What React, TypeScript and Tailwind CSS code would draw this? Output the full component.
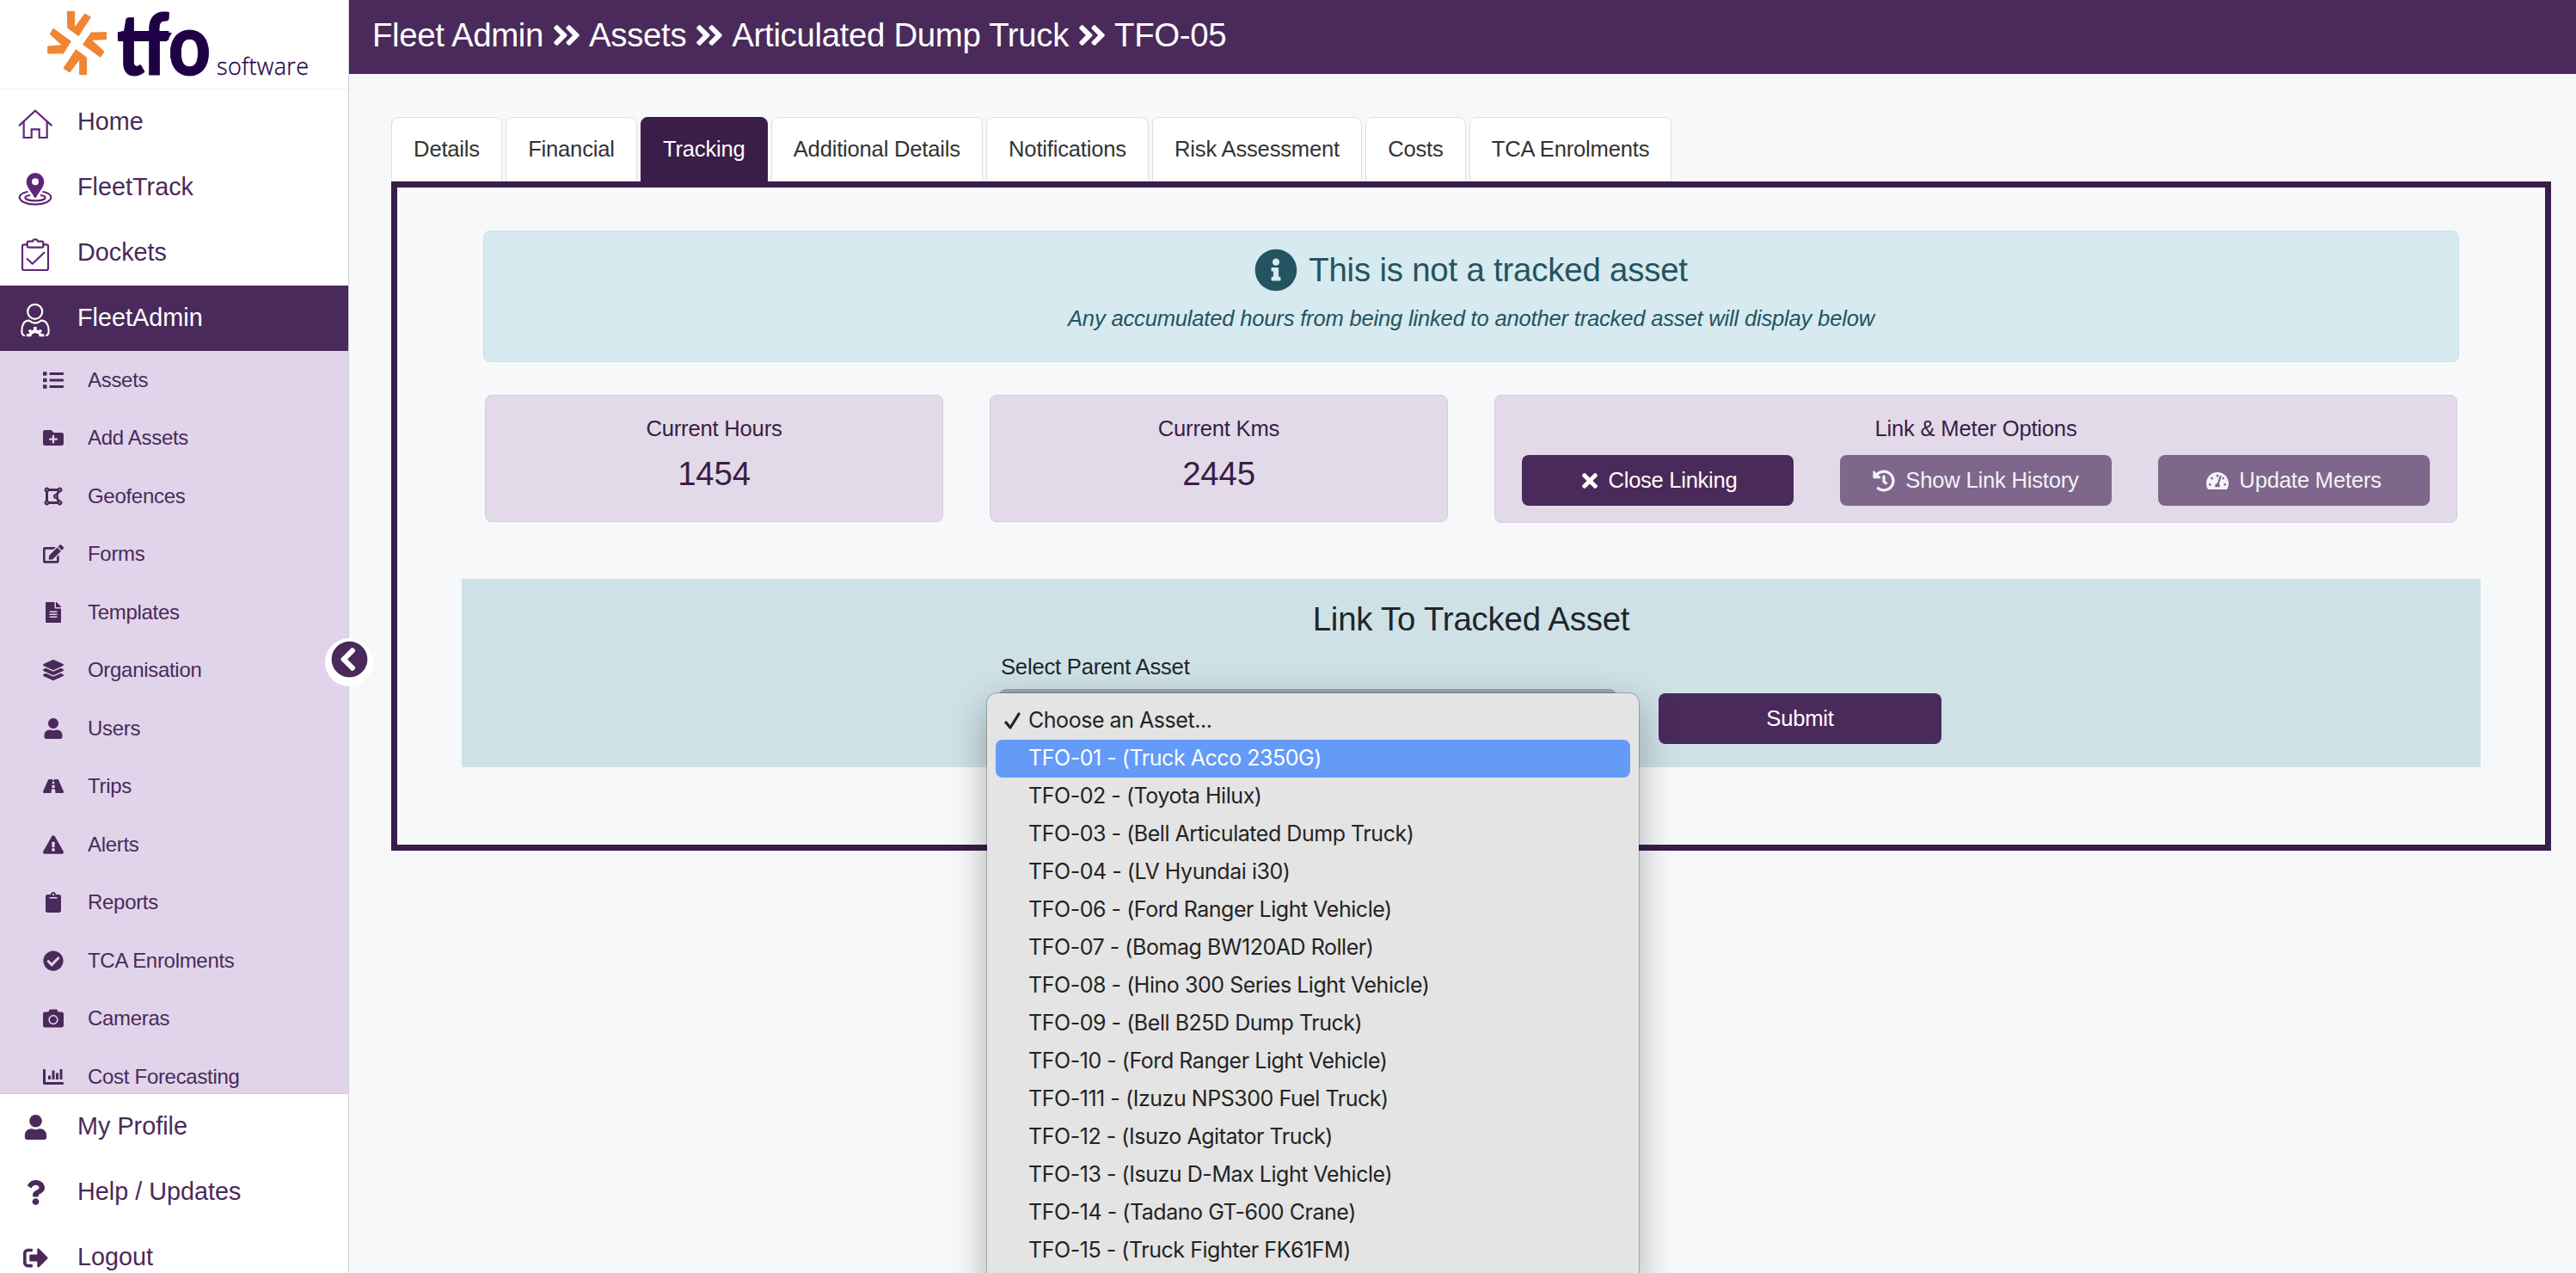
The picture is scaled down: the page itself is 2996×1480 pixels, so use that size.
import React from "react";
import type { IconType } from "react-icons";
import {
  FaAngleDoubleRight,
  FaCamera,
  FaChartBar,
  FaCheckCircle,
  FaChevronCircleLeft,
  FaClipboard,
  FaDrawPolygon,
  FaEdit,
  FaExclamationTriangle,
  FaFileAlt,
  FaFolderPlus,
  FaHistory,
  FaInfoCircle,
  FaLayerGroup,
  FaList,
  FaQuestion,
  FaRoad,
  FaSignOutAlt,
  FaTachometerAlt,
  FaTimes,
  FaUser,
} from "react-icons/fa";

const HomeIcon = () => (
  <svg width="40" height="35" viewBox="63 381 120 105" fill="none" stroke="currentColor" strokeWidth="6.5">
    <path d="M68 437 123 386l56 51" strokeLinecap="round" />
    <path d="M83 424v56h27v-29h27v29h27v-56" />
  </svg>
);

const TrackIcon = () => (
  <svg width="40" height="40" viewBox="63 601 120 120" fill="none" stroke="currentColor" strokeWidth="6.5" strokeLinecap="round">
    <path
      d="M123 604a31 31 0 0 0-31 31c0 20 19 36 27 54q4 3 8 0c8-18 27-34 27-54a31 31 0 0 0-31-31Zm0 19a12 12 0 1 1 0 24 12 12 0 0 1 0-24Z"
      fill="currentColor"
      fillRule="evenodd"
      stroke="none"
    />
    <path d="M95 670c-17 4-27 11-27 19 0 14 24 25 55 25s55-11 55-25c0-8-10-15-27-19" />
    <path d="M103 682c-10 2-15 5-15 8 0 7 16 11 35 11s35-4 35-11c0-3-5-6-15-8" />
  </svg>
);

const DocketIcon = () => (
  <svg width="40" height="40" viewBox="63 828 120 120" fill="none" stroke="currentColor" strokeWidth="6.5" strokeLinejoin="round" strokeLinecap="round">
    <path d="M95 853H84q-6 0-6 6v77q0 6 6 6h78q6 0 6-6v-77q0-6-6-6h-11" />
    <path d="M100 842h14q1-7 9-7t9 7h14q5 0 5 5v11q0 5-5 5h-46q-5 0-5-5v-11q0-5 5-5Z" />
    <path d="m95 903 18 17 41-39" />
  </svg>
);

const AdminIcon = () => (
  <svg width="40" height="40" viewBox="63 1054 120 120" fill="none" stroke="currentColor" strokeWidth="6.5" strokeLinecap="round">
    <circle cx="122" cy="1085" r="25.5" />
    <path d="M84 1168c-8-3-8-10-8-16 0-22 9-36 25-36 14 11 30 11 43 0 16 0 26 14 26 36 0 6 0 13-8 16" />
    <path
      d="M92 1172v-9h9l2-5-5-6 7-6 6 5 6-3v-10h11v10l6 3 6-5 7 6-5 6 2 5h10v9h-17c0-8-6-12-14-12s-14 4-14 12Z"
      fill="currentColor"
      stroke="none"
    />
  </svg>
);

const Logo = () => (
  <svg width="405" height="103" viewBox="0 0 405 103">
    <g transform="scale(0.33333)" fill="#f08534" stroke="#f08534" strokeWidth="3" strokeLinejoin="round">
      <path d="M235 40h25v57l36-49 20 12-42 65-38-28Z" />
      <path d="M371 113v24l-52 2 44 41-13 19-60-44 28-41Z" />
      <path d="m265 173 37 28v59h-24v-54l-35 46-21-14Z" />
      <path d="m186 100 61 44-26 42h-54v-24l50-4-42-39Z" />
    </g>
    <text x="136" y="86.500" fontSize="100" fontWeight="900" fill="#1f0045" stroke="#1f0045" strokeWidth="1" textLength="109" lengthAdjust="spacingAndGlyphs" className="font-['Lato',sans-serif]">
      tfo
    </text>
    <path d="M137 38h63l-6 10h-57Z" fill="#1f0045" />
    <text x="252" y="87" fontSize="27" fontWeight="300" fill="#1f0045" stroke="#1f0045" strokeWidth="0.3" textLength="107" className="font-['Open_Sans',sans-serif]">
      software
    </text>
  </svg>
);

const mainNav: { label: string; icon: React.FC; active?: boolean }[] = [
  { label: "Home", icon: HomeIcon },
  { label: "FleetTrack", icon: TrackIcon },
  { label: "Dockets", icon: DocketIcon },
  { label: "FleetAdmin", icon: AdminIcon, active: true },
];

const subNav: { label: string; icon: IconType }[] = [
  { label: "Assets", icon: FaList },
  { label: "Add Assets", icon: FaFolderPlus },
  { label: "Geofences", icon: FaDrawPolygon },
  { label: "Forms", icon: FaEdit },
  { label: "Templates", icon: FaFileAlt },
  { label: "Organisation", icon: FaLayerGroup },
  { label: "Users", icon: FaUser },
  { label: "Trips", icon: FaRoad },
  { label: "Alerts", icon: FaExclamationTriangle },
  { label: "Reports", icon: FaClipboard },
  { label: "TCA Enrolments", icon: FaCheckCircle },
  { label: "Cameras", icon: FaCamera },
  { label: "Cost Forecasting", icon: FaChartBar },
];

const footerNav: { label: string; icon: IconType }[] = [
  { label: "My Profile", icon: FaUser },
  { label: "Help / Updates", icon: FaQuestion },
  { label: "Logout", icon: FaSignOutAlt },
];

const tabs = [
  "Details",
  "Financial",
  "Tracking",
  "Additional Details",
  "Notifications",
  "Risk Assessment",
  "Costs",
  "TCA Enrolments",
];

const breadcrumbs = ["Fleet Admin", "Assets", "Articulated Dump Truck", "TFO-05"];

const assets = [
  "TFO-01 - (Truck Acco 2350G)",
  "TFO-02 - (Toyota Hilux)",
  "TFO-03 - (Bell Articulated Dump Truck)",
  "TFO-04 - (LV Hyundai i30)",
  "TFO-06 - (Ford Ranger Light Vehicle)",
  "TFO-07 - (Bomag BW120AD Roller)",
  "TFO-08 - (Hino 300 Series Light Vehicle)",
  "TFO-09 - (Bell B25D Dump Truck)",
  "TFO-10 - (Ford Ranger Light Vehicle)",
  "TFO-111 - (Izuzu NPS300 Fuel Truck)",
  "TFO-12 - (Isuzo Agitator Truck)",
  "TFO-13 - (Isuzu D-Max Light Vehicle)",
  "TFO-14 - (Tadano GT-600 Crane)",
  "TFO-15 - (Truck Fighter FK61FM)",
];

const Sidebar = () => (
  <aside className="relative flex w-[406px] shrink-0 flex-col border-r border-[#cfcfd6] bg-white text-[#4a2a5a]">
    <div className="h-[104px] shrink-0 border-b border-[#f1f1f3]">
      <Logo />
    </div>
    <nav className="shrink-0">
      {mainNav.map(({ label, icon: Icon, active }) => (
        <a
          key={label}
          className={`flex h-[76px] items-center text-[28.8px] ${
            active ? "bg-[#4a2a5a] text-white" : ""
          }`}
        >
          <span className={`ml-[21px] mr-[29px] flex w-10 justify-center pt-1 ${active ? "" : "text-[#5f2579]"}`}>
            <Icon />
          </span>
          {label}
        </a>
      ))}
    </nav>
    <div className="h-[864px] shrink-0 overflow-hidden border-b border-[#cfcfd6] bg-[#e1d4ea]">
      {subNav.map(({ label, icon: Icon }) => (
        <a key={label} className="flex h-[67.5px] items-center text-[24px] tracking-[-0.3px]">
          <span className="ml-[42px] mr-[20px] flex w-10 justify-center">
            <Icon className="h-6 w-auto" />
          </span>
          {label}
        </a>
      ))}
    </div>
    <nav className="shrink-0">
      {footerNav.map(({ label, icon: Icon }) => (
        <a key={label} className="flex h-[76px] items-center text-[28.8px]">
          <span className="ml-[21px] mr-[29px] flex w-10 justify-center">
            <Icon className="h-[29px] w-auto" />
          </span>
          {label}
        </a>
      ))}
    </nav>
    <button type="button" className="absolute left-[378px] top-[742px] z-10 flex size-14 justify-center rounded-full bg-white pt-[3px]">
      <FaChevronCircleLeft size={43} />
    </button>
  </aside>
);

const StatCard = ({ label, value }: { label: string; value: string }) => (
  <div className="flex h-[148px] w-[533px] flex-col items-center rounded-lg border border-[#d8cbe0] bg-[#e2dae8] pt-[20px] text-[#3a1d48]">
    <h4 className="text-[25.6px] leading-[36px]">{label}</h4>
    <p className="mt-[12px] text-[38.4px] leading-[46px]">{value}</p>
  </div>
);

const OptionButton = ({
  icon: Icon,
  label,
  muted,
}: {
  icon: IconType;
  label: string;
  muted?: boolean;
}) => (
  <button
    type="button"
    className={`flex h-[59px] w-[316px] items-center justify-center rounded-lg bg-[#4a2a5a] text-[25.6px] text-white ${
      muted ? "gap-3 opacity-65" : "gap-[9px] tracking-[-0.3px]"
    }`}
  >
    <Icon className="h-[26px] w-auto" />
    {label}
  </button>
);

// Native select popup, opened over the form
const AssetMenu = () => (
  <ul className="absolute left-[-14px] top-[5px] z-20 h-[700px] w-[758px] rounded-xl bg-[#e4e4e4] p-[10px] font-['Inter',sans-serif] text-[25px] tracking-[-0.46px] text-[#232323] shadow-[0_0_0_1px_rgba(0,0,0,0.22),0_14px_44px_rgba(0,0,0,0.3)]">
    <li className="flex h-11 items-center pl-[10px]">
      <svg width="20" height="20" viewBox="0 0 20 20" className="mr-[8px]" fill="none" stroke="currentColor" strokeWidth="3.2" strokeLinecap="round" strokeLinejoin="round">
        <path d="m2 12 5 6L17 2" />
      </svg>
      Choose an Asset...
    </li>
    {assets.map((asset, index) => (
      <li
        key={asset}
        className={`flex h-11 items-center rounded-lg pl-[38px] ${
          index === 0 ? "bg-[#649af8] text-white" : ""
        }`}
      >
        {asset}
      </li>
    ))}
  </ul>
);

const App = () => (
  <div className="flex h-[1480px] w-[2996px] overflow-hidden bg-[#f7f8fa] font-['Liberation_Sans',Arial,sans-serif]">
    <Sidebar />
    <main className="min-w-0 flex-1 tracking-[-0.2px]">
      <header className="flex h-[86px] items-center bg-[#4a2a5a] pb-[4px] pl-[27px] text-[38.4px] tracking-[-0.33px] text-white">
        {breadcrumbs.map((crumb, index) => (
          <React.Fragment key={crumb}>
            {index > 0 && <FaAngleDoubleRight size={38} className="ml-[8px] mr-[7px]" />}
            {crumb}
          </React.Fragment>
        ))}
      </header>

      <div className="pl-[49px] pr-[29px] pt-[50px]">
        <div className="flex w-[1494px] gap-1 border-b border-[#dee2e6]">
          {tabs.map((tab) => (
            <a
              key={tab}
              className={`-mb-px flex h-[75px] items-center rounded-t-lg border px-[25.1px] text-[25.6px] ${
                tab === "Tracking"
                  ? "border-[#3a1d48] bg-[#3a1d48] text-white"
                  : "border-[#dcdfe2] bg-white text-[#333]"
              }`}
            >
              {tab}
            </a>
          ))}
        </div>

        <section className="h-[778px] border-[7px] border-[#3a1d48] px-[75px] pt-[50px]">
          <div className="mx-[25px] h-[153px] rounded-lg border border-[#c3e3e9] bg-[#d6eaef] text-center text-[#245361]">
            <h3 className="mt-[19px] flex items-center justify-center gap-[13px] text-[38.4px] leading-[52px]">
              <FaInfoCircle size={50} />
              This is not a tracked asset
            </h3>
            <p className="mt-[12px] text-[25.6px] italic leading-[36px]">
              Any accumulated hours from being linked to another tracked asset will display below
            </p>
          </div>

          <div className="ml-[27px] mt-[38px] flex items-start gap-[54px]">
            <StatCard label="Current Hours" value="1454" />
            <StatCard label="Current Kms" value="2445" />
            <div className="h-[149px] w-[1120px] rounded-lg border border-[#d8cbe0] bg-[#e2dae8] px-[31px] pt-[20px] text-[#3a1d48]">
              <h4 className="text-center text-[25.6px] leading-[36px]">Link &amp; Meter Options</h4>
              <div className="mt-[13px] flex justify-between">
                <OptionButton icon={FaTimes} label="Close Linking" />
                <OptionButton icon={FaHistory} label="Show Link History" muted />
                <OptionButton icon={FaTachometerAlt} label="Update Meters" muted />
              </div>
            </div>
          </div>

          <div className="mt-[65px] h-[219px] bg-[#cee1e6] pt-[22px] text-[#212529]">
            <h3 className="text-center text-[38.4px] leading-[50px]">Link To Tracked Asset</h3>
            <div className="ml-[625px] mt-[12px] flex items-end gap-[49px]">
              <div className="relative w-[718px]">
                <label className="ml-[2px] block text-[25.6px] leading-[36px]">Select Parent Asset</label>
                <div className="relative mt-[8px] h-[64px] rounded-lg bg-[#a2a6b8]">
                  <AssetMenu />
                </div>
              </div>
              <button type="button" className="h-[59px] w-[329px] rounded-lg bg-[#4a2a5a] text-[25.6px] text-white">
                Submit
              </button>
            </div>
          </div>
        </section>
      </div>
    </main>
  </div>
);

export default App;
